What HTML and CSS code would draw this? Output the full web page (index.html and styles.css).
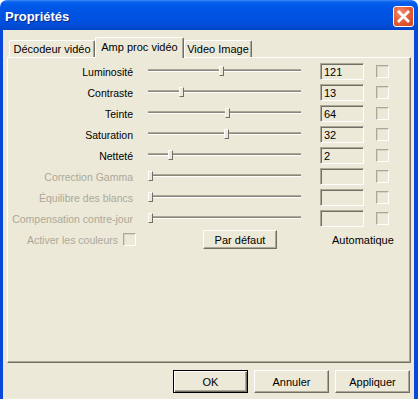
FILE: index.html
```html
<!DOCTYPE html>
<html>
<head>
<meta charset="utf-8">
<link rel="stylesheet" href="styles.css">
</head>
<body>
<div class="window">
  <div class="titlebar">
    <span class="title">Propriétés</span>
    <div class="close">
      <svg width="19" height="19" viewBox="0 0 19 19"><path d="M5 5 L14 14 M14 5 L5 14" stroke="#fff" stroke-width="2.8" stroke-linecap="square" fill="none"/></svg>
    </div>
  </div>
  <div class="frame">
    <div class="tabs">
      <div class="tab t1">Décodeur vidéo</div>
      <div class="tab active">Amp proc vidéo</div>
      <div class="tab t3">Video Image</div>
    </div>
    <div class="panel">
      <div class="rows">
        <div class="row"><div class="label">Luminosité</div><div class="slider"><div class="track"></div><div class="thumb" style="left:71px"></div></div><div class="field">121</div><div class="check"></div></div>
        <div class="row"><div class="label">Contraste</div><div class="slider"><div class="track"></div><div class="thumb" style="left:31px"></div></div><div class="field">13</div><div class="check"></div></div>
        <div class="row"><div class="label">Teinte</div><div class="slider"><div class="track"></div><div class="thumb" style="left:77px"></div></div><div class="field">64</div><div class="check"></div></div>
        <div class="row"><div class="label">Saturation</div><div class="slider"><div class="track"></div><div class="thumb" style="left:76px"></div></div><div class="field">32</div><div class="check"></div></div>
        <div class="row"><div class="label">Netteté</div><div class="slider"><div class="track"></div><div class="thumb" style="left:20px"></div></div><div class="field">2</div><div class="check"></div></div>
        <div class="row disabled"><div class="label">Correction Gamma</div><div class="slider"><div class="track"></div><div class="thumb" style="left:0px"></div></div><div class="field"></div><div class="check"></div></div>
        <div class="row disabled"><div class="label">Équilibre des blancs</div><div class="slider"><div class="track"></div><div class="thumb" style="left:0px"></div></div><div class="field"></div><div class="check"></div></div>
        <div class="row disabled"><div class="label">Compensation contre-jour</div><div class="slider"><div class="track"></div><div class="thumb" style="left:0px"></div></div><div class="field"></div><div class="check"></div></div>
      </div>
      <div class="lastrow">
        <div class="activer"><span class="dis">Activer les couleurs</span><div class="check"></div></div>
        <div class="btn defaut">Par défaut</div>
        <div class="auto">Automatique</div>
      </div>
    </div>
    <div class="buttons">
      <div class="btn big ok">OK</div>
      <div class="btn big">Annuler</div>
      <div class="btn big">Appliquer</div>
    </div>
  </div>
</div>
</body>
</html>
```
FILE: styles.css
```css
* { box-sizing: border-box; }
html, body { margin: 0; padding: 0; }
body {
  width: 418px; height: 399px; overflow: hidden;
  font-family: "Liberation Sans", Arial, sans-serif;
  font-size: 11px; color: #000;
  background: #fff;
}
.window { width: 418px; height: 399px; display: flex; flex-direction: column; }
.titlebar {
  height: 30px; flex: none;
  display: flex; align-items: center; justify-content: space-between;
  padding: 0 4px 0 5px;
  border-radius: 7px 7px 0 0;
  background: linear-gradient(#3d8cf6 0px, #0a61ec 2px, #0058ea 5px, #0054e3 12px, #0050dd 22px, #0049d0 28px, #0043c4 30px);
}
.title {
  color: #fff; font-weight: bold; font-size: 13px;
  text-shadow: 1px 1px 0 #0a2a8a;
  margin-top: 3px;
}
.close {
  width: 21px; height: 21px; margin-top: 3px;
  border: 1px solid #fff; border-radius: 3px;
  background: radial-gradient(circle at 35% 30%, #f2906c 0%, #e6603a 45%, #cc4420 100%);
  display: flex; align-items: center; justify-content: center;
}
.close svg { display: block; }
.frame {
  flex: 1;
  background: #ece9d8;
  border-left: 3px solid #0a48dc;
  border-right: 4px solid #0a48dc;
  padding: 7px 3px 0 4px;
  display: flex; flex-direction: column;
}
.tabs { display: flex; align-items: flex-end; height: 20px; padding-left: 2px; position: relative; z-index: 1; }
.tab {
  height: 17px; display: flex; align-items: center; justify-content: center;
  border-top: 1px solid #fff; border-left: 1px solid #fff;
  border-right: 1px solid #716f64;
  box-shadow: inset -1px 0 #aca899;
  border-radius: 2px 2px 0 0;
  background: #ece9d8;
}
.t1 { width: 86px; }
.active { width: 89px; height: 21px; margin-bottom: -1px; padding-bottom: 3px; }
.t3 { width: 68px; }
.panel {
  height: 306px; flex: none;
  border-top: 1px solid #fff; border-left: 1px solid #fff;
  border-right: 1px solid #716f64; border-bottom: 1px solid #716f64;
  box-shadow: inset -1px -1px #aca899;
  padding-top: 5px;
  font-size: 10.5px;
}
.rows { display: flex; flex-direction: column; gap: 4px; }
.row { display: flex; align-items: center; height: 17px; }
.label { width: 125px; text-align: right; white-space: nowrap; }
.slider { width: 153px; height: 17px; margin-left: 15px; position: relative; }
.track {
  position: absolute; left: 0; right: 0; top: 6px; height: 3px;
  border-top: 1px solid #aca899; background: #8a877a; border-bottom: 1px solid #fff;
}
.thumb {
  position: absolute; top: 3px; width: 5px; height: 10px;
  background: #ece9d8;
  border-top: 1px solid #fff; border-left: 1px solid #fff;
  border-right: 1px solid #716f64; border-bottom: 1px solid #716f64;
}
.field {
  width: 44px; height: 17px; margin-left: 19px;
  border-top: 1px solid #aca899; border-left: 1px solid #aca899;
  border-right: 1px solid #fff; border-bottom: 1px solid #fff;
  box-shadow: inset 1px 1px #716f64;
  padding: 1px 0 0 3px; line-height: 14px; font-size: 11px;
}
.check {
  width: 13px; height: 13px; margin-left: 12px;
  border-top: 1px solid #aca899; border-left: 1px solid #aca899;
  border-right: 1px solid #fff; border-bottom: 1px solid #fff;
  box-shadow: inset 1px 1px #d8d4c4;
}
.disabled .label, .dis { color: #aca899; }
.lastrow { display: flex; align-items: center; height: 19px; margin-top: 3px; }
.activer { width: 128px; display: flex; align-items: center; justify-content: flex-end; }
.activer .check { margin-left: 5px; }
.btn {
  display: flex; align-items: center; justify-content: center;
  background: #ece9d8;
  border-top: 1px solid #fff; border-left: 1px solid #fff;
  border-right: 1px solid #716f64; border-bottom: 1px solid #716f64;
  box-shadow: inset -1px -1px #aca899;
}
.defaut { width: 74px; height: 19px; margin-left: 67px; font-size: 11px; }
.auto { margin-left: 55px; font-size: 11px; }
.buttons { display: flex; justify-content: flex-end; gap: 6px; margin-top: 7px; padding-right: 1px; }
.big { width: 75px; height: 23px; }
.ok {
  border: 1px solid #000;
  box-shadow: inset 1px 1px #fff, inset -1px -1px #716f64, inset -2px -2px #aca899;
}
```
